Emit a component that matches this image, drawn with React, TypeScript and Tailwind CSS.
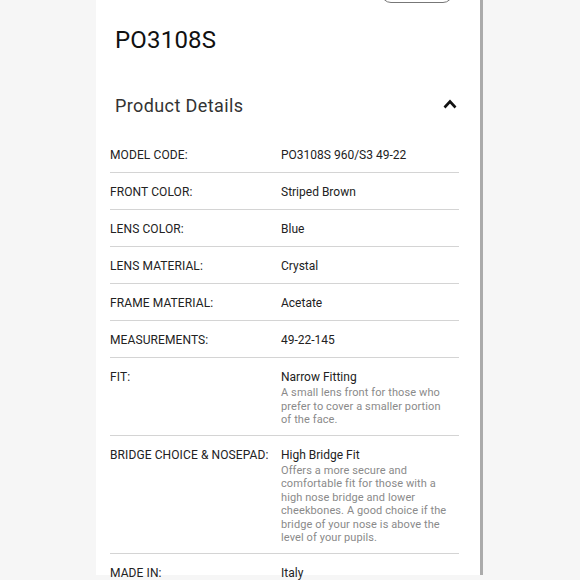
import React from 'react';

type Row = { label: string; value: string; note?: string };

const rows: Row[] = [
  { label: 'MODEL CODE:', value: 'PO3108S 960/S3 49-22' },
  { label: 'FRONT COLOR:', value: 'Striped Brown' },
  { label: 'LENS COLOR:', value: 'Blue' },
  { label: 'LENS MATERIAL:', value: 'Crystal' },
  { label: 'FRAME MATERIAL:', value: 'Acetate' },
  { label: 'MEASUREMENTS:', value: '49-22-145' },
  {
    label: 'FIT:',
    value: 'Narrow Fitting',
    note: 'A small lens front for those who prefer to cover a smaller portion of the face.',
  },
  {
    label: 'BRIDGE CHOICE & NOSEPAD:',
    value: 'High Bridge Fit',
    note: 'Offers a more secure and comfortable fit for those with a high nose bridge and lower cheekbones. A good choice if the bridge of your nose is above the level of your pupils.',
  },
  { label: 'MADE IN:', value: 'Italy' },
];

const DetailRow: React.FC<{ row: Row; last: boolean }> = ({ row, last }) => (
  <div className={`flex pt-[11px] pb-[8px] ${last ? '' : 'border-b border-[#d4d4d4]'}`}>
    <div className="w-[171px] shrink-0 text-[12px] leading-[17px] text-[#222] tracking-[0.1px]">{row.label}</div>
    <div className="flex-1">
      <div className="text-[12px] leading-[17px] text-[#222]">{row.value}</div>
      {row.note && (
        <div className="w-[172px] text-[11px] leading-[13.5px] text-[#8a8a8a] tracking-[0.1px]">{row.note}</div>
      )}
    </div>
  </div>
);

export default function App() {
  return (
    <div
      className="w-[580px] h-[580px] overflow-hidden bg-[#f6f6f6] flex"
      style={{ fontFamily: 'Roboto, "Liberation Sans", sans-serif' }}
    >
      <div className="ml-[96px] w-[387px] h-[575px] bg-white border-r-[3px] border-[#ababab] flex flex-col">
        <div className="flex justify-end pr-[27px]">
          <div className="-mt-[30px] w-[72px] h-[33px] rounded-[10px] border border-[#777]" />
        </div>
        <div className="pl-[19px] mt-[21px] text-[24px] leading-[32px] text-[#111] tracking-[0.2px]">
          PO3108S
        </div>
        <div className="mt-[38px] pl-[19px] pr-[23px] flex items-center justify-between">
          <div className="text-[18px] leading-[24px] text-[#333] tracking-[0.4px]">Product Details</div>
          <svg width="14" height="10" viewBox="0 0 14 10" className="-mt-[4px]">
            <polyline points="1.5,8.5 7,2.5 12.5,8.5" fill="none" stroke="#111" strokeWidth="2.6" />
          </svg>
        </div>
        <div className="mt-[18px] ml-[14px] w-[349px]">
          {rows.map((r, i) => (
            <DetailRow key={r.label} row={r} last={i === rows.length - 1} />
          ))}
        </div>
      </div>
    </div>
  );
}
